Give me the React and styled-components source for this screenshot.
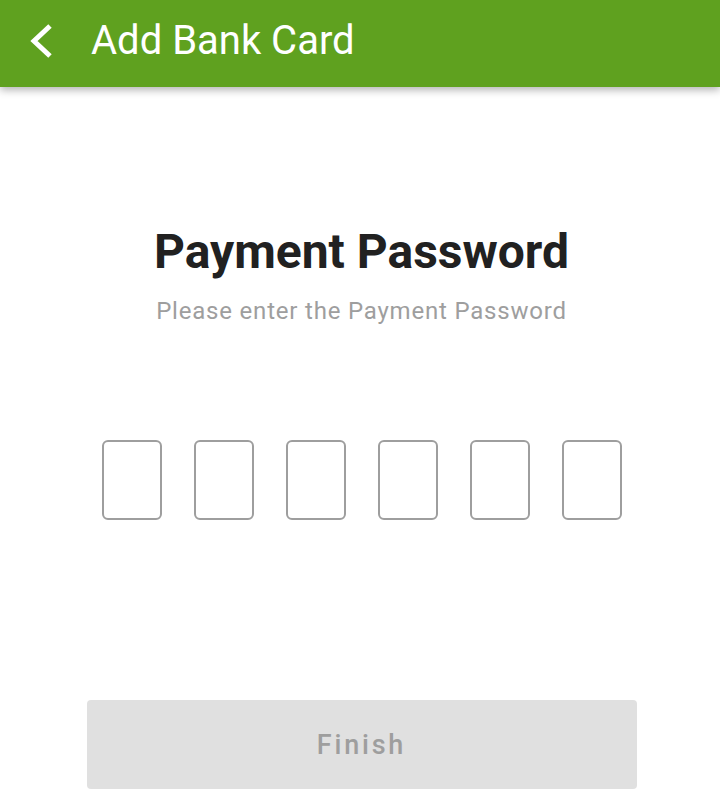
import React from "react"
import styled, { createGlobalStyle } from "styled-components"

const GlobalStyle = createGlobalStyle`
  html, body {
    margin: 0;
    padding: 0;
    background: #ffffff;
    font-family: Roboto, "Noto Sans", sans-serif;
  }
`

const Page = styled.div`
  width: 720px;
  height: 808px;
  display: flex;
  flex-direction: column;
  background: #ffffff;
  overflow: hidden;
`

const Toolbar = styled.header`
  height: 87px;
  flex: 0 0 auto;
  display: flex;
  align-items: center;
  background: #5fa11f;
  box-shadow: 0 3px 8px rgba(0, 0, 0, 0.3);
  position: relative;
  z-index: 1;
`

const BackButton = styled.button`
  width: 91px;
  height: 87px;
  padding: 0 0 5px 28px;
  border: none;
  background: none;
  display: flex;
  align-items: center;
  justify-content: flex-start;
`

const ToolbarTitle = styled.h1`
  margin: 0 0 6px 0;
  font-size: 40px;
  line-height: 40px;
  font-weight: 400;
  color: #ffffff;
`

const Content = styled.main`
  flex: 1;
  display: flex;
  flex-direction: column;
  align-items: center;
  padding: 137px 0 0 3px;
`

const Heading = styled.h2`
  margin: 0;
  font-size: 48px;
  line-height: 56px;
  font-weight: 700;
  color: #212121;
`

const Subtitle = styled.p`
  margin: 16px 0 0 0;
  font-size: 24px;
  line-height: 30px;
  letter-spacing: 0.8px;
  color: #9e9e9e;
`

const PinRow = styled.div`
  margin-top: 114px;
  display: flex;
  gap: 32px;
`

const PinBox = styled.div`
  width: 56px;
  height: 76px;
  border: 2px solid #9e9e9e;
  border-radius: 6px;
`

const FinishButton = styled.button`
  margin-top: 180px;
  width: 550px;
  height: 89px;
  border: none;
  border-radius: 4px;
  background: #e0e0e0;
  color: #9e9e9e;
  font-family: Roboto, sans-serif;
  font-size: 27px;
  font-weight: 500;
  letter-spacing: 2.8px;
`

export default function App() {
  return (
    <Page>
      <GlobalStyle />
      <Toolbar>
        <BackButton aria-label="Back">
          <svg width="26" height="36" viewBox="0 0 26 36">
            <path d="M22 3 L6 18 L22 33" fill="none" stroke="#fff" strokeWidth="5" />
          </svg>
        </BackButton>
        <ToolbarTitle>Add Bank Card</ToolbarTitle>
      </Toolbar>
      <Content>
        <Heading>Payment Password</Heading>
        <Subtitle>Please enter the Payment Password</Subtitle>
        <PinRow>
          {[0, 1, 2, 3, 4, 5].map(i => (
            <PinBox key={i} />
          ))}
        </PinRow>
        <FinishButton>Finish</FinishButton>
      </Content>
    </Page>
  )
}
